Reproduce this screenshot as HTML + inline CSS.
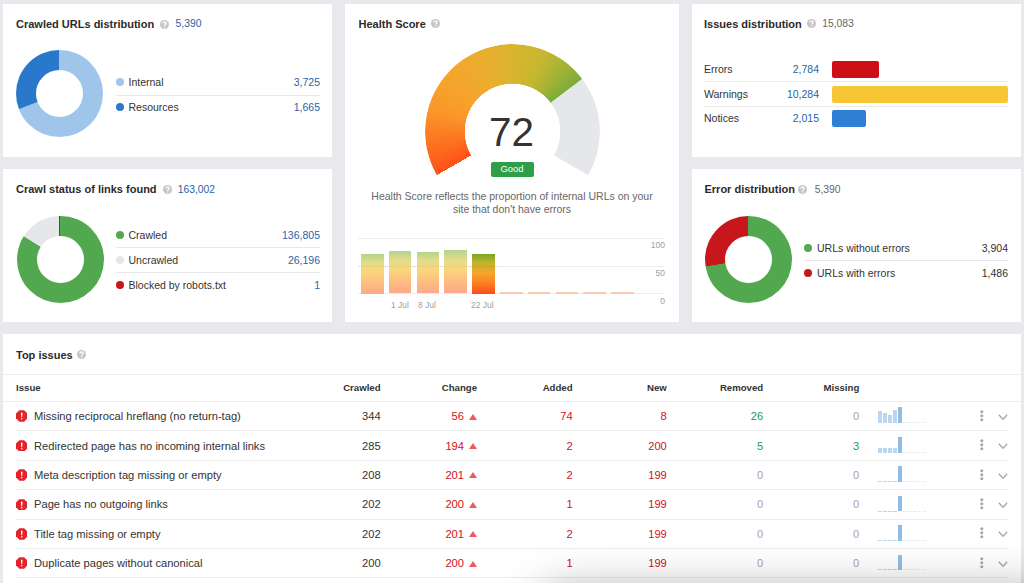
<!DOCTYPE html>
<html><head><meta charset="utf-8">
<style>
*{box-sizing:border-box;margin:0;padding:0}
html,body{width:1024px;height:583px;overflow:hidden;background:#e7e9ec;font-family:"Liberation Sans",sans-serif;color:#333;position:relative}
.p{position:absolute;background:#fff}
.t{position:absolute;white-space:nowrap;line-height:1}
.ttl{font-size:11px;font-weight:bold;color:#2b2b2b}
.hlp{position:absolute}
.blue{color:#2a63a8}
.lg{font-size:10.5px}
.dot{position:absolute;width:8px;height:8px;border-radius:50%}
.hr{position:absolute;height:1px;background:#e8e8e8}
.r{text-align:right}
.th{font-size:9.65px;font-weight:bold;color:#333}
.rw{font-size:11.15px;color:#333}
.red{color:#d0121b}
.grn{color:#2b9a48}
.gry{color:#a6a6a6}
.donut{position:absolute;border-radius:50%}
.donut i{position:absolute;border-radius:50%;background:#fff}
</style></head><body>

<!-- Panel 1: Crawled URLs distribution -->
<div class="p" style="left:3px;top:4px;width:329px;height:153px"></div>
<div class="t ttl" style="left:16px;top:18.5px">Crawled URLs distribution</div>
<svg class="hlp" style="left:160px;top:19.55px" width="9" height="9" viewBox="0 0 9 9"><circle cx="4.5" cy="4.5" r="4.5" fill="#c6c6c6"/><path d="M3.0 3.5C3.0 2.4 3.7 1.75 4.6 1.75C5.5 1.75 6.15 2.35 6.15 3.2C6.15 4.3 4.7 4.4 4.7 5.6" fill="none" stroke="#fff" stroke-width="1.25"/><circle cx="4.7" cy="7.0" r="0.75" fill="#fff"/></svg>
<div class="t blue" style="left:175.6px;top:19.2px;font-size:10.3px">5,390</div>
<div class="donut" style="left:16px;top:49.8px;width:87px;height:87px;background:conic-gradient(#9fc5ea 0 69%,#2a78cc 69.35% 99.65%,#9fc5ea 100%)"><i style="left:20px;top:20px;width:47px;height:47px"></i></div>
<div class="dot" style="left:116px;top:78px;background:#9fc5ea"></div>
<div class="t lg" style="left:128.5px;top:77px">Internal</div>
<div class="t lg blue r" style="right:704px;top:77px">3,725</div>
<div class="hr" style="left:116px;top:95px;width:204px"></div>
<div class="dot" style="left:116px;top:103px;background:#2a78cc"></div>
<div class="t lg" style="left:128.5px;top:102px">Resources</div>
<div class="t lg blue r" style="right:704px;top:102px">1,665</div>

<!-- Panel 2: Crawl status -->
<div class="p" style="left:3px;top:169px;width:329px;height:153px"></div>
<div class="t ttl" style="left:16px;top:184px">Crawl status of links found</div>
<svg class="hlp" style="left:162.5px;top:184.7px" width="9" height="9" viewBox="0 0 9 9"><circle cx="4.5" cy="4.5" r="4.5" fill="#c6c6c6"/><path d="M3.0 3.5C3.0 2.4 3.7 1.75 4.6 1.75C5.5 1.75 6.15 2.35 6.15 3.2C6.15 4.3 4.7 4.4 4.7 5.6" fill="none" stroke="#fff" stroke-width="1.25"/><circle cx="4.7" cy="7.0" r="0.75" fill="#fff"/></svg>
<div class="t blue" style="left:177.8px;top:184.9px;font-size:10.3px">163,002</div>
<div class="donut" style="left:16.5px;top:215.5px;width:87px;height:87px;background:conic-gradient(#52a84f 0 83.8%,#e6e7ea 84.1% 99.7%,#52a84f 100%)"><i style="left:20px;top:20px;width:47px;height:47px"></i></div>
<div style="position:absolute;left:59px;top:215.5px;width:1.3px;height:20px;background:#c8161d"></div>
<div class="dot" style="left:116px;top:231px;background:#52a84f"></div>
<div class="t lg" style="left:128.5px;top:230px">Crawled</div>
<div class="t lg blue r" style="right:704px;top:230px">136,805</div>
<div class="hr" style="left:116px;top:247px;width:204px"></div>
<div class="dot" style="left:116px;top:256px;background:#e6e7ea"></div>
<div class="t lg" style="left:128.5px;top:255px">Uncrawled</div>
<div class="t lg blue r" style="right:704px;top:255px">26,196</div>
<div class="hr" style="left:116px;top:272px;width:204px"></div>
<div class="dot" style="left:116px;top:280.5px;background:#c8161d"></div>
<div class="t lg" style="left:128.5px;top:279.5px">Blocked by robots.txt</div>
<div class="t lg blue r" style="right:704px;top:279.5px">1</div>

<!-- Health Score -->
<div class="p" style="left:345px;top:4px;width:334px;height:318px"></div>
<div class="t ttl" style="left:358.5px;top:19px">Health Score</div>
<svg class="hlp" style="left:431.2px;top:19.2px" width="9" height="9" viewBox="0 0 9 9"><circle cx="4.5" cy="4.5" r="4.5" fill="#c6c6c6"/><path d="M3.0 3.5C3.0 2.4 3.7 1.75 4.6 1.75C5.5 1.75 6.15 2.35 6.15 3.2C6.15 4.3 4.7 4.4 4.7 5.6" fill="none" stroke="#fff" stroke-width="1.25"/><circle cx="4.7" cy="7.0" r="0.75" fill="#fff"/></svg>


<div style="position:absolute;left:424.8px;top:44px;width:175px;height:175px;border-radius:50%;background:conic-gradient(from -120deg,#ff5019 0deg,#fc6e1f 18deg,#f9972a 45deg,#f6a42b 68deg,#ebad2d 95deg,#dab42e 120deg,#c6b730 142deg,#9fb236 160deg,#7aad3a 172.6deg,#e6e7ea 173.2deg,#e6e7ea 240deg,transparent 240deg);-webkit-mask:radial-gradient(circle,transparent 47.5px,#000 48px)"></div>
<div class="t" style="left:489.1px;top:111.7px;font-size:40.5px;color:#333">72</div>
<div style="position:absolute;left:490.5px;top:162px;width:43px;height:14.5px;border-radius:2px;background:#2e9e48;color:#fff;font-size:9.4px;line-height:13.5px;text-align:center">Good</div>
<div class="t lg" style="left:345px;width:334px;top:190px;text-align:center;color:#666;line-height:13px;white-space:normal">Health Score reflects the proportion of internal URLs on your<br>site that don't have errors</div>


<div class="hr" style="left:358px;top:238px;width:306px;background:#ececec"></div>
<div class="hr" style="left:358px;top:266px;width:306px;background:#ececec"></div>
<div class="hr" style="left:358px;top:293px;width:306px;background:#ececec"></div>
<div style="position:absolute;left:361.0px;top:253.8px;width:22.5px;height:39.8px;background:linear-gradient(#b3d490 0%,#e3dc86 22%,#fad67c 45%,#fcc07f 70%,#fda888 100%)"></div>
<div style="position:absolute;left:388.8px;top:251.1px;width:22.5px;height:42.4px;background:linear-gradient(#b3d490 0%,#e3dc86 22%,#fad67c 45%,#fcc07f 70%,#fda888 100%)"></div>
<div style="position:absolute;left:416.6px;top:251.9px;width:22.5px;height:41.6px;background:linear-gradient(#b3d490 0%,#e3dc86 22%,#fad67c 45%,#fcc07f 70%,#fda888 100%)"></div>
<div style="position:absolute;left:444.4px;top:250.3px;width:22.5px;height:43.2px;background:linear-gradient(#b3d490 0%,#e3dc86 22%,#fad67c 45%,#fcc07f 70%,#fda888 100%)"></div>
<div style="position:absolute;left:472.2px;top:253.8px;width:22.5px;height:39.8px;background:linear-gradient(#76a62a 0%,#c1b42b 22%,#f5a52a 48%,#fb7c22 75%,#ff4a17 100%)"></div>
<div style="position:absolute;left:500.0px;top:292px;width:22.5px;height:2px;background:#fbc9ad"></div>
<div style="position:absolute;left:527.8px;top:292px;width:22.5px;height:2px;background:#fbc9ad"></div>
<div style="position:absolute;left:555.6px;top:292px;width:22.5px;height:2px;background:#fbc9ad"></div>
<div style="position:absolute;left:583.4px;top:292px;width:22.5px;height:2px;background:#fbc9ad"></div>
<div style="position:absolute;left:611.2px;top:292px;width:22.5px;height:2px;background:#fbc9ad"></div>
<div class="hr" style="left:358px;top:266px;width:140px;background:rgba(0,0,0,0.035)"></div>
<div class="t" style="left:391px;top:301.3px;font-size:8.5px;color:#a0a0a0">1 Jul</div>
<div class="t" style="left:418px;top:301.3px;font-size:8.5px;color:#a0a0a0">8 Jul</div>
<div class="t" style="left:471px;top:301.3px;font-size:8.5px;color:#a0a0a0">22 Jul</div>
<div class="t r" style="right:359px;top:241px;font-size:8.5px;color:#a0a0a0">100</div>
<div class="t r" style="right:359px;top:268.6px;font-size:8.5px;color:#a0a0a0">50</div>
<div class="t r" style="right:359px;top:297px;font-size:8.5px;color:#a0a0a0">0</div>

<!-- Panel 3: Issues distribution -->
<div class="p" style="left:692px;top:4px;width:329px;height:153px"></div>
<div class="t ttl" style="left:704px;top:18.5px">Issues distribution</div>
<svg class="hlp" style="left:806.5px;top:19.25px" width="9" height="9" viewBox="0 0 9 9"><circle cx="4.5" cy="4.5" r="4.5" fill="#c6c6c6"/><path d="M3.0 3.5C3.0 2.4 3.7 1.75 4.6 1.75C5.5 1.75 6.15 2.35 6.15 3.2C6.15 4.3 4.7 4.4 4.7 5.6" fill="none" stroke="#fff" stroke-width="1.25"/><circle cx="4.7" cy="7.0" r="0.75" fill="#fff"/></svg>
<div class="t" style="left:822.3px;top:19.2px;font-size:10.3px;color:#666">15,083</div>


<div class="t lg" style="left:704px;top:63.6px">Errors</div>
<div class="t lg blue r" style="right:205px;top:63.6px">2,784</div>
<div style="position:absolute;left:832px;top:60.5px;width:47px;height:17px;border-radius:2px;background:#cc1016"></div>
<div class="hr" style="left:704px;top:81px;width:304px;background:#ebebeb"></div>
<div class="t lg" style="left:704px;top:88.6px">Warnings</div>
<div class="t lg blue r" style="right:205px;top:88.6px">10,284</div>
<div style="position:absolute;left:832px;top:85.5px;width:175.5px;height:17px;border-radius:2px;background:#f8c534"></div>
<div class="hr" style="left:704px;top:106px;width:304px;background:#ebebeb"></div>
<div class="t lg" style="left:704px;top:113.1px">Notices</div>
<div class="t lg blue r" style="right:205px;top:113.1px">2,015</div>
<div style="position:absolute;left:832px;top:110px;width:34px;height:17px;border-radius:2px;background:#2f7fd4"></div>

<!-- Panel 4: Error distribution -->
<div class="p" style="left:692px;top:169px;width:329px;height:153px"></div>
<div class="t ttl" style="left:704.5px;top:184px">Error distribution</div>


<svg class="hlp" style="left:798.3px;top:184.7px" width="9" height="9" viewBox="0 0 9 9"><circle cx="4.5" cy="4.5" r="4.5" fill="#c6c6c6"/><path d="M3.0 3.5C3.0 2.4 3.7 1.75 4.6 1.75C5.5 1.75 6.15 2.35 6.15 3.2C6.15 4.3 4.7 4.4 4.7 5.6" fill="none" stroke="#fff" stroke-width="1.25"/><circle cx="4.7" cy="7.0" r="0.75" fill="#fff"/></svg>
<div class="t" style="left:814.7px;top:184.9px;font-size:10.3px;color:#666">5,390</div>
<div class="donut" style="left:705px;top:215.5px;width:87px;height:87px;background:conic-gradient(#52a84f 0 72.3%,#c8161d 72.6% 99.65%,#52a84f 100%)"><i style="left:20px;top:20px;width:47px;height:47px"></i></div>
<div class="dot" style="left:804px;top:244px;background:#52a84f"></div>
<div class="t lg" style="left:817px;top:243px">URLs without errors</div>
<div class="t lg r" style="right:16px;top:243px">3,904</div>
<div class="hr" style="left:804px;top:260px;width:204px"></div>
<div class="dot" style="left:804px;top:268.5px;background:#c8161d"></div>
<div class="t lg" style="left:817px;top:267.5px">URLs with errors</div>
<div class="t lg r" style="right:16px;top:267.5px">1,486</div>

<!-- Top issues -->
<div class="p" style="left:3px;top:334px;width:1018px;height:260px"></div>
<div class="t ttl" style="left:16px;top:350px">Top issues</div>


<svg class="hlp" style="left:77.3px;top:350.4px" width="9" height="9" viewBox="0 0 9 9"><circle cx="4.5" cy="4.5" r="4.5" fill="#c6c6c6"/><path d="M3.0 3.5C3.0 2.4 3.7 1.75 4.6 1.75C5.5 1.75 6.15 2.35 6.15 3.2C6.15 4.3 4.7 4.4 4.7 5.6" fill="none" stroke="#fff" stroke-width="1.25"/><circle cx="4.7" cy="7.0" r="0.75" fill="#fff"/></svg>
<div class="hr" style="left:3px;top:374px;width:1018px;background:#ebebeb"></div>
<div class="t th" style="left:16px;top:382.5px">Issue</div>
<div class="t th r" style="right:643.4px;top:382.5px">Crawled</div>
<div class="t th r" style="right:547px;top:382.5px">Change</div>
<div class="t th r" style="right:451.4px;top:382.5px">Added</div>
<div class="t th r" style="right:357.2px;top:382.5px">New</div>
<div class="t th r" style="right:260.8px;top:382.5px">Removed</div>
<div class="t th r" style="right:164.7px;top:382.5px">Missing</div>
<div class="hr" style="left:3px;top:401px;width:1018px;background:#ebebeb"></div>
<svg style="position:absolute;left:15.8px;top:410.3px" width="11.5" height="11.8" viewBox="0 0 12 12"><path d="M3.5 0H8.5L12 3.5V8.5L8.5 12H3.5L0 8.5V3.5Z" fill="#e3242b"/><path d="M5.15 2.6H6.85L6.5 7.3H5.5Z" fill="#fff"/><circle cx="6" cy="9" r="0.85" fill="#fff"/></svg>
<div class="t rw" style="left:34px;top:411.2px">Missing reciprocal hreflang (no return-tag)</div>
<div class="t rw r" style="right:643.4px;top:411.2px">344</div>
<div class="t rw r red" style="right:560px;top:411.2px">56</div>
<svg style="position:absolute;left:469px;top:413.6px" width="8" height="6" viewBox="0 0 8 6"><path d="M4 0L8 6H0Z" fill="#ef5a5f"/></svg>
<div class="t rw r red" style="right:451.4px;top:411.2px">74</div>
<div class="t rw r red" style="right:357.2px;top:411.2px">8</div>
<div class="t rw r grn" style="right:260.8px;top:411.2px">26</div>
<div class="t rw r gry" style="right:164.7px;top:411.2px">0</div>
<div style="position:absolute;left:878.4px;top:411.3px;width:3.8px;height:12.0px;background:#bad6f0"></div>
<div style="position:absolute;left:883.3px;top:413.2px;width:3.8px;height:10.1px;background:#bad6f0"></div>
<div style="position:absolute;left:888.2px;top:414.5px;width:3.8px;height:8.8px;background:#bad6f0"></div>
<div style="position:absolute;left:893.1px;top:410.0px;width:3.8px;height:13.3px;background:#bad6f0"></div>
<div style="position:absolute;left:898.0px;top:407.2px;width:3.8px;height:16.1px;background:#90bde6"></div>
<div style="position:absolute;left:902.8px;top:422.3px;width:24px;height:1px;background:repeating-linear-gradient(90deg,#e6edf4 0 3.8px,transparent 3.8px 4.9px)"></div>
<svg style="position:absolute;left:980px;top:409.7px" width="4" height="12" viewBox="0 0 4 12"><circle cx="1.8" cy="1.8" r="1.55" fill="#a8a8a8"/><circle cx="1.8" cy="5.8" r="1.55" fill="#a8a8a8"/><circle cx="1.8" cy="9.7" r="1.55" fill="#a8a8a8"/></svg>
<svg style="position:absolute;left:997.6px;top:413.7px" width="10" height="7" viewBox="0 0 10 7"><path d="M0.8 0.8L5 5.2L9.2 0.8" fill="none" stroke="#a8a8a8" stroke-width="1.35"/></svg>
<div class="hr" style="left:16px;top:430.4px;width:992px;background:#ebebeb"></div>
<svg style="position:absolute;left:15.8px;top:439.7px" width="11.5" height="11.8" viewBox="0 0 12 12"><path d="M3.5 0H8.5L12 3.5V8.5L8.5 12H3.5L0 8.5V3.5Z" fill="#e3242b"/><path d="M5.15 2.6H6.85L6.5 7.3H5.5Z" fill="#fff"/><circle cx="6" cy="9" r="0.85" fill="#fff"/></svg>
<div class="t rw" style="left:34px;top:440.6px">Redirected page has no incoming internal links</div>
<div class="t rw r" style="right:643.4px;top:440.6px">285</div>
<div class="t rw r red" style="right:560px;top:440.6px">194</div>
<svg style="position:absolute;left:469px;top:443.0px" width="8" height="6" viewBox="0 0 8 6"><path d="M4 0L8 6H0Z" fill="#ef5a5f"/></svg>
<div class="t rw r red" style="right:451.4px;top:440.6px">2</div>
<div class="t rw r red" style="right:357.2px;top:440.6px">200</div>
<div class="t rw r grn" style="right:260.8px;top:440.6px">5</div>
<div class="t rw r grn" style="right:164.7px;top:440.6px">3</div>
<div style="position:absolute;left:878.4px;top:447.6px;width:3.8px;height:5.1px;background:#bad6f0"></div>
<div style="position:absolute;left:883.3px;top:447.6px;width:3.8px;height:5.1px;background:#bad6f0"></div>
<div style="position:absolute;left:888.2px;top:448.4px;width:3.8px;height:4.3px;background:#bad6f0"></div>
<div style="position:absolute;left:893.1px;top:448.4px;width:3.8px;height:4.3px;background:#bad6f0"></div>
<div style="position:absolute;left:898.0px;top:437.2px;width:3.8px;height:15.5px;background:#90bde6"></div>
<div style="position:absolute;left:902.8px;top:451.7px;width:24px;height:1px;background:repeating-linear-gradient(90deg,#e6edf4 0 3.8px,transparent 3.8px 4.9px)"></div>
<svg style="position:absolute;left:980px;top:439.1px" width="4" height="12" viewBox="0 0 4 12"><circle cx="1.8" cy="1.8" r="1.55" fill="#a8a8a8"/><circle cx="1.8" cy="5.8" r="1.55" fill="#a8a8a8"/><circle cx="1.8" cy="9.7" r="1.55" fill="#a8a8a8"/></svg>
<svg style="position:absolute;left:997.6px;top:443.1px" width="10" height="7" viewBox="0 0 10 7"><path d="M0.8 0.8L5 5.2L9.2 0.8" fill="none" stroke="#a8a8a8" stroke-width="1.35"/></svg>
<div class="hr" style="left:16px;top:459.8px;width:992px;background:#ebebeb"></div>
<svg style="position:absolute;left:15.8px;top:469.1px" width="11.5" height="11.8" viewBox="0 0 12 12"><path d="M3.5 0H8.5L12 3.5V8.5L8.5 12H3.5L0 8.5V3.5Z" fill="#e3242b"/><path d="M5.15 2.6H6.85L6.5 7.3H5.5Z" fill="#fff"/><circle cx="6" cy="9" r="0.85" fill="#fff"/></svg>
<div class="t rw" style="left:34px;top:470.0px">Meta description tag missing or empty</div>
<div class="t rw r" style="right:643.4px;top:470.0px">208</div>
<div class="t rw r red" style="right:560px;top:470.0px">201</div>
<svg style="position:absolute;left:469px;top:472.4px" width="8" height="6" viewBox="0 0 8 6"><path d="M4 0L8 6H0Z" fill="#ef5a5f"/></svg>
<div class="t rw r red" style="right:451.4px;top:470.0px">2</div>
<div class="t rw r red" style="right:357.2px;top:470.0px">199</div>
<div class="t rw r gry" style="right:260.8px;top:470.0px">0</div>
<div class="t rw r gry" style="right:164.7px;top:470.0px">0</div>
<div style="position:absolute;left:878.4px;top:481.1px;width:3.8px;height:1.0px;background:#bad6f0"></div>
<div style="position:absolute;left:883.3px;top:481.1px;width:3.8px;height:1.0px;background:#bad6f0"></div>
<div style="position:absolute;left:888.2px;top:481.1px;width:3.8px;height:1.0px;background:#bad6f0"></div>
<div style="position:absolute;left:893.1px;top:481.1px;width:3.8px;height:1.0px;background:#bad6f0"></div>
<div style="position:absolute;left:898.0px;top:466.3px;width:3.8px;height:15.8px;background:#90bde6"></div>
<div style="position:absolute;left:902.8px;top:481.1px;width:24px;height:1px;background:repeating-linear-gradient(90deg,#e6edf4 0 3.8px,transparent 3.8px 4.9px)"></div>
<svg style="position:absolute;left:980px;top:468.5px" width="4" height="12" viewBox="0 0 4 12"><circle cx="1.8" cy="1.8" r="1.55" fill="#a8a8a8"/><circle cx="1.8" cy="5.8" r="1.55" fill="#a8a8a8"/><circle cx="1.8" cy="9.7" r="1.55" fill="#a8a8a8"/></svg>
<svg style="position:absolute;left:997.6px;top:472.5px" width="10" height="7" viewBox="0 0 10 7"><path d="M0.8 0.8L5 5.2L9.2 0.8" fill="none" stroke="#a8a8a8" stroke-width="1.35"/></svg>
<div class="hr" style="left:16px;top:489.2px;width:992px;background:#ebebeb"></div>
<svg style="position:absolute;left:15.8px;top:498.5px" width="11.5" height="11.8" viewBox="0 0 12 12"><path d="M3.5 0H8.5L12 3.5V8.5L8.5 12H3.5L0 8.5V3.5Z" fill="#e3242b"/><path d="M5.15 2.6H6.85L6.5 7.3H5.5Z" fill="#fff"/><circle cx="6" cy="9" r="0.85" fill="#fff"/></svg>
<div class="t rw" style="left:34px;top:499.4px">Page has no outgoing links</div>
<div class="t rw r" style="right:643.4px;top:499.4px">202</div>
<div class="t rw r red" style="right:560px;top:499.4px">200</div>
<svg style="position:absolute;left:469px;top:501.8px" width="8" height="6" viewBox="0 0 8 6"><path d="M4 0L8 6H0Z" fill="#ef5a5f"/></svg>
<div class="t rw r red" style="right:451.4px;top:499.4px">1</div>
<div class="t rw r red" style="right:357.2px;top:499.4px">199</div>
<div class="t rw r gry" style="right:260.8px;top:499.4px">0</div>
<div class="t rw r gry" style="right:164.7px;top:499.4px">0</div>
<div style="position:absolute;left:878.4px;top:510.5px;width:3.8px;height:1.0px;background:#bad6f0"></div>
<div style="position:absolute;left:883.3px;top:510.5px;width:3.8px;height:1.0px;background:#bad6f0"></div>
<div style="position:absolute;left:888.2px;top:510.5px;width:3.8px;height:1.0px;background:#bad6f0"></div>
<div style="position:absolute;left:893.1px;top:510.5px;width:3.8px;height:1.0px;background:#bad6f0"></div>
<div style="position:absolute;left:898.0px;top:495.7px;width:3.8px;height:15.8px;background:#90bde6"></div>
<div style="position:absolute;left:902.8px;top:510.5px;width:24px;height:1px;background:repeating-linear-gradient(90deg,#e6edf4 0 3.8px,transparent 3.8px 4.9px)"></div>
<svg style="position:absolute;left:980px;top:497.9px" width="4" height="12" viewBox="0 0 4 12"><circle cx="1.8" cy="1.8" r="1.55" fill="#a8a8a8"/><circle cx="1.8" cy="5.8" r="1.55" fill="#a8a8a8"/><circle cx="1.8" cy="9.7" r="1.55" fill="#a8a8a8"/></svg>
<svg style="position:absolute;left:997.6px;top:501.9px" width="10" height="7" viewBox="0 0 10 7"><path d="M0.8 0.8L5 5.2L9.2 0.8" fill="none" stroke="#a8a8a8" stroke-width="1.35"/></svg>
<div class="hr" style="left:16px;top:518.6px;width:992px;background:#ebebeb"></div>
<svg style="position:absolute;left:15.8px;top:527.9px" width="11.5" height="11.8" viewBox="0 0 12 12"><path d="M3.5 0H8.5L12 3.5V8.5L8.5 12H3.5L0 8.5V3.5Z" fill="#e3242b"/><path d="M5.15 2.6H6.85L6.5 7.3H5.5Z" fill="#fff"/><circle cx="6" cy="9" r="0.85" fill="#fff"/></svg>
<div class="t rw" style="left:34px;top:528.8px">Title tag missing or empty</div>
<div class="t rw r" style="right:643.4px;top:528.8px">202</div>
<div class="t rw r red" style="right:560px;top:528.8px">201</div>
<svg style="position:absolute;left:469px;top:531.2px" width="8" height="6" viewBox="0 0 8 6"><path d="M4 0L8 6H0Z" fill="#ef5a5f"/></svg>
<div class="t rw r red" style="right:451.4px;top:528.8px">2</div>
<div class="t rw r red" style="right:357.2px;top:528.8px">199</div>
<div class="t rw r gry" style="right:260.8px;top:528.8px">0</div>
<div class="t rw r gry" style="right:164.7px;top:528.8px">0</div>
<div style="position:absolute;left:878.4px;top:539.9px;width:3.8px;height:1.0px;background:#bad6f0"></div>
<div style="position:absolute;left:883.3px;top:539.9px;width:3.8px;height:1.0px;background:#bad6f0"></div>
<div style="position:absolute;left:888.2px;top:539.9px;width:3.8px;height:1.0px;background:#bad6f0"></div>
<div style="position:absolute;left:893.1px;top:539.9px;width:3.8px;height:1.0px;background:#bad6f0"></div>
<div style="position:absolute;left:898.0px;top:525.1px;width:3.8px;height:15.8px;background:#90bde6"></div>
<div style="position:absolute;left:902.8px;top:539.9px;width:24px;height:1px;background:repeating-linear-gradient(90deg,#e6edf4 0 3.8px,transparent 3.8px 4.9px)"></div>
<svg style="position:absolute;left:980px;top:527.3px" width="4" height="12" viewBox="0 0 4 12"><circle cx="1.8" cy="1.8" r="1.55" fill="#a8a8a8"/><circle cx="1.8" cy="5.8" r="1.55" fill="#a8a8a8"/><circle cx="1.8" cy="9.7" r="1.55" fill="#a8a8a8"/></svg>
<svg style="position:absolute;left:997.6px;top:531.3px" width="10" height="7" viewBox="0 0 10 7"><path d="M0.8 0.8L5 5.2L9.2 0.8" fill="none" stroke="#a8a8a8" stroke-width="1.35"/></svg>
<div class="hr" style="left:16px;top:548.0px;width:992px;background:#ebebeb"></div>
<svg style="position:absolute;left:15.8px;top:557.3px" width="11.5" height="11.8" viewBox="0 0 12 12"><path d="M3.5 0H8.5L12 3.5V8.5L8.5 12H3.5L0 8.5V3.5Z" fill="#e3242b"/><path d="M5.15 2.6H6.85L6.5 7.3H5.5Z" fill="#fff"/><circle cx="6" cy="9" r="0.85" fill="#fff"/></svg>
<div class="t rw" style="left:34px;top:558.2px">Duplicate pages without canonical</div>
<div class="t rw r" style="right:643.4px;top:558.2px">200</div>
<div class="t rw r red" style="right:560px;top:558.2px">200</div>
<svg style="position:absolute;left:469px;top:560.6px" width="8" height="6" viewBox="0 0 8 6"><path d="M4 0L8 6H0Z" fill="#ef5a5f"/></svg>
<div class="t rw r red" style="right:451.4px;top:558.2px">1</div>
<div class="t rw r red" style="right:357.2px;top:558.2px">199</div>
<div class="t rw r gry" style="right:260.8px;top:558.2px">0</div>
<div class="t rw r gry" style="right:164.7px;top:558.2px">0</div>
<div style="position:absolute;left:878.4px;top:569.3px;width:3.8px;height:1.0px;background:#bad6f0"></div>
<div style="position:absolute;left:883.3px;top:569.3px;width:3.8px;height:1.0px;background:#bad6f0"></div>
<div style="position:absolute;left:888.2px;top:569.3px;width:3.8px;height:1.0px;background:#bad6f0"></div>
<div style="position:absolute;left:893.1px;top:569.3px;width:3.8px;height:1.0px;background:#bad6f0"></div>
<div style="position:absolute;left:898.0px;top:554.5px;width:3.8px;height:15.8px;background:#90bde6"></div>
<div style="position:absolute;left:902.8px;top:569.3px;width:24px;height:1px;background:repeating-linear-gradient(90deg,#e6edf4 0 3.8px,transparent 3.8px 4.9px)"></div>
<svg style="position:absolute;left:980px;top:556.7px" width="4" height="12" viewBox="0 0 4 12"><circle cx="1.8" cy="1.8" r="1.55" fill="#a8a8a8"/><circle cx="1.8" cy="5.8" r="1.55" fill="#a8a8a8"/><circle cx="1.8" cy="9.7" r="1.55" fill="#a8a8a8"/></svg>
<svg style="position:absolute;left:997.6px;top:560.7px" width="10" height="7" viewBox="0 0 10 7"><path d="M0.8 0.8L5 5.2L9.2 0.8" fill="none" stroke="#a8a8a8" stroke-width="1.35"/></svg>
<div class="hr" style="left:16px;top:577.4px;width:992px;background:#ebebeb"></div>

<div style="position:absolute;left:548px;top:596px;width:600px;height:200px;border-radius:14px;background:#ddd;box-shadow:0 0 44px 8px rgba(0,0,0,0.3)"></div>
</body></html>
